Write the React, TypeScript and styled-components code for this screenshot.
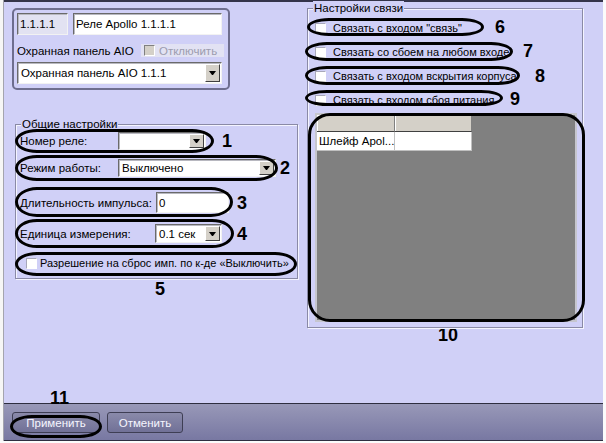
import React from 'react'
import styled, { createGlobalStyle } from 'styled-components'

const GlobalStyle = createGlobalStyle`
  html, body { margin: 0; padding: 0; }
  body {
    width: 606px;
    height: 443px;
    overflow: hidden;
    background: #fbfbfb;
    font-family: "Liberation Sans", Arial, sans-serif;
    font-size: 11px;
    color: #000;
  }
`

const Screen = styled.div`
  display: flex;
  width: 606px;
  height: 443px;
`

const LeftEdge = styled.div`
  width: 3px;
  height: 441px;
  border-right: 1px solid #a4a4ae;
  background: #f6f6f6;
`

const Window = styled.div`
  display: flex;
  flex-direction: column;
  width: 599px;
  height: 441px;
  box-sizing: border-box;
  border-top: 2px solid #34344a;
  background: #d0d0f7;
`

const Main = styled.div`
  flex: 1;
  display: flex;
  gap: 9px;
  padding: 6px 0 0 8px;
`

const Column = styled.div<{ $w: number }>`
  display: flex;
  flex-direction: column;
  width: ${p => p.$w}px;
`

const HeadPanel = styled.div`
  width: 218px;
  height: 82px;
  box-sizing: border-box;
  border: 2px solid #6e6e8e;
  border-radius: 5px;
  padding: 3px 0 0 3px;
`

const HeadRow = styled.div<{ $mt?: number; $h: number }>`
  display: flex;
  align-items: center;
  gap: 5px;
  height: ${p => p.$h}px;
  margin-top: ${p => p.$mt ?? 0}px;
`

const TextBox = styled.div<{ $w: number; $h: number; $ro?: boolean }>`
  width: ${p => p.$w}px;
  height: ${p => p.$h}px;
  box-sizing: border-box;
  display: flex;
  align-items: center;
  padding-left: 2px;
  background: ${p => (p.$ro ? '#e2e2f2' : '#fff')};
  border: 1px solid;
  border-color: #6a6a6a #f2f2f2 #f2f2f2 #6a6a6a;
  box-shadow: inset 1px 1px 0 #b8b8c0;
  font-size: 11.5px;
  white-space: nowrap;
  overflow: hidden;
`

const Combo = styled(TextBox)`
  padding: 1px 1px 1px 3px;
`

const ComboText = styled.span`
  flex: 1;
  white-space: nowrap;
  overflow: hidden;
`

const DropButton = styled.span`
  width: 15px;
  align-self: stretch;
  box-sizing: border-box;
  display: flex;
  align-items: center;
  justify-content: center;
  background: #d4d0c8;
  border: 1px solid;
  border-color: #fff #404040 #404040 #fff;
`

const Arrow = styled.span`
  width: 1px;
  height: 0;
  border-left: 3px solid transparent;
  border-right: 3px solid transparent;
  border-top: 4px solid #000;
`

const HeadLabel = styled.span`
  flex: 1;
  font-size: 11.5px;
  white-space: nowrap;
`

const DisabledCheck = styled.div`
  display: flex;
  align-items: center;
  gap: 4px;
  width: 80px;
  height: 13px;
  padding-left: 3px;
  margin-right: 4px;
  background: #e2e2f3;
  color: #9c9cae;
  font-size: 11.5px;
`

const CheckBox = styled.span<{ $disabled?: boolean }>`
  flex: none;
  width: 11px;
  height: 11px;
  box-sizing: border-box;
  background: ${p => (p.$disabled ? '#d4d0c8' : '#fff')};
  border: 1px solid;
  border-color: ${p => (p.$disabled ? '#808080 #fff #fff #808080' : '#a8a8ba #fff #fff #a8a8ba')};
`

const Group = styled.div<{ $w: number; $h: number; $mt: number; $ml: number }>`
  position: relative;
  display: flex;
  flex-direction: column;
  width: ${p => p.$w}px;
  height: ${p => p.$h}px;
  margin: ${p => p.$mt}px 0 0 ${p => p.$ml}px;
  box-sizing: border-box;
  border: 1px solid #8a8aa6;
  box-shadow: inset 1px 1px 0 #f4f4ff, 1px 1px 0 #f4f4ff;
`

const Legend = styled.span`
  align-self: flex-start;
  margin: -8px 0 0 5px;
  padding: 0 1px;
  line-height: 14px;
  background: #d0d0f7;
  font-size: 11.5px;
`

const FieldRow = styled.div<{ $mt: number; $h: number; $pl?: number }>`
  position: relative;
  display: flex;
  align-items: center;
  height: ${p => p.$h}px;
  margin-top: ${p => p.$mt}px;
  padding-left: ${p => p.$pl ?? 4}px;
`

const FieldLabel = styled.span<{ $w: number }>`
  flex: none;
  width: ${p => p.$w}px;
  font-size: 11.5px;
  white-space: nowrap;
`

const CheckLabel = styled.span<{ $gap: number }>`
  margin-left: ${p => p.$gap}px;
  font-size: 11px;
  white-space: nowrap;
`

const Ring = styled.span<{ $l: number; $t: number; $w: number; $h: number; $r?: string }>`
  position: absolute;
  left: ${p => p.$l}px;
  top: ${p => p.$t}px;
  width: ${p => p.$w}px;
  height: ${p => p.$h}px;
  box-sizing: border-box;
  border: 3px solid #000;
  border-radius: ${p => p.$r ?? '22px / 50%'};
  pointer-events: none;
`

const Num = styled.span<{ $ml?: number }>`
  margin-left: ${p => p.$ml ?? 0}px;
  color: #000;
  font: bold 18px/18px "Liberation Sans", Arial, sans-serif;
`

const Tag = styled.span<{ $x: number; $y: number }>`
  position: absolute;
  left: ${p => p.$x}px;
  top: ${p => p.$y}px;
  color: #000;
  font: bold 18px/18px "Liberation Sans", Arial, sans-serif;
`

const Caption = styled.div<{ $pl: number; $mt: number }>`
  padding-left: ${p => p.$pl}px;
  margin-top: ${p => p.$mt}px;
  font: bold 18px/18px "Liberation Sans", Arial, sans-serif;
`

const GridWrap = styled.div`
  position: relative;
  margin: 6px 0 0 7px;
`

const GridBox = styled.div`
  width: 262px;
  height: 209px;
  box-sizing: border-box;
  background: #808080;
  border: 2px solid #c6c6ce;
`

const Table = styled.div`
  display: grid;
  grid-template-columns: 78px 77px;
  grid-template-rows: 17px 19px;
`

const HeadCell = styled.div`
  box-sizing: border-box;
  background: #d4d0c8;
  border-right: 1px solid #808080;
  border-bottom: 1px solid #404040;
  box-shadow: inset 1px 1px 0 #fff;
`

const Cell = styled.div`
  box-sizing: border-box;
  display: flex;
  align-items: center;
  padding-left: 2px;
  background: #fff;
  border-right: 1px solid #c0c0c0;
  border-bottom: 1px solid #c0c0c0;
  font-size: 11.5px;
  white-space: nowrap;
`

const Footer = styled.div`
  display: flex;
  gap: 7px;
  height: 38px;
  box-sizing: border-box;
  padding: 8px 0 0 8px;
  border-top: 1px solid #2e2e40;
  border-bottom: 1px solid #2e2e40;
  background: linear-gradient(#9898b8, #7878a2);
`

const Button = styled.div<{ $w: number }>`
  position: relative;
  width: ${p => p.$w}px;
  height: 21px;
  box-sizing: border-box;
  display: flex;
  align-items: center;
  justify-content: center;
  border: 1px solid #3e3e54;
  border-radius: 3px;
  background: linear-gradient(#8a8aaa, #717197);
  color: #f6f6ff;
  font-size: 11.5px;
`

const Select = ({ w, h, text }: { w: number; h: number; text: string }) => (
  <Combo $w={w} $h={h}>
    <ComboText>{text}</ComboText>
    <DropButton><Arrow /></DropButton>
  </Combo>
)

const links = [
  { text: 'Связать с входом "связь"', mt: 6, ring: [-1, -3, 177, 18], tag: [187, -3], n: '6' },
  { text: 'Связать со сбоем на любом входе', mt: 10, ring: [-3, -3, 208, 19], tag: [215, -3], n: '7' },
  { text: 'Связать с входом вскрытия корпуса', mt: 10, ring: [-3, -3, 215, 19], tag: [227, -2], n: '8' },
  { text: 'Связать с входом сбоя питания', mt: 10, ring: [-3, -3, 198, 16], tag: [202, -3], n: '9' },
]

export default function App() {
  return (
    <>
      <GlobalStyle />
      <Screen>
        <LeftEdge />
        <Window>
          <Main>
            <Column $w={286}>
              <HeadPanel>
                <HeadRow $h={22}>
                  <TextBox $w={51} $h={22} $ro>1.1.1.1</TextBox>
                  <TextBox $w={149} $h={22}>Реле Apollo 1.1.1.1</TextBox>
                </HeadRow>
                <HeadRow $h={15} $mt={8}>
                  <HeadLabel>Охранная панель AIO</HeadLabel>
                  <DisabledCheck>
                    <CheckBox $disabled />
                    Отключить
                  </DisabledCheck>
                </HeadRow>
                <HeadRow $h={22} $mt={4}>
                  <Select w={205} h={22} text="Охранная панель AIO 1.1.1" />
                </HeadRow>
              </HeadPanel>

              <Group $w={283} $h={155} $mt={34} $ml={3}>
                <Legend>Общие настройки</Legend>
                <FieldRow $mt={1} $h={18}>
                  <FieldLabel $w={98}>Номер реле:</FieldLabel>
                  <Select w={88} h={18} text="" />
                  <Num $ml={16}>1</Num>
                  <Ring $l={-1} $t={-3} $w={199} $h={24} />
                </FieldRow>
                <FieldRow $mt={9} $h={18}>
                  <FieldLabel $w={98}>Режим работы:</FieldLabel>
                  <Select w={158} h={18} text="Выключено" />
                  <Num $ml={4}>2</Num>
                  <Ring $l={-1} $t={-4} $w={263} $h={26} />
                </FieldRow>
                <FieldRow $mt={15} $h={21}>
                  <FieldLabel $w={136}>Длительность импульса:</FieldLabel>
                  <TextBox $w={73} $h={21}>0</TextBox>
                  <Num $ml={8}>3</Num>
                  <Ring $l={-1} $t={-5} $w={218} $h={30} />
                </FieldRow>
                <FieldRow $mt={11} $h={19}>
                  <FieldLabel $w={135}>Единица измерения:</FieldLabel>
                  <Select w={67} h={19} text="0.1 сек" />
                  <Num $ml={15}>4</Num>
                  <Ring $l={-1} $t={-5} $w={219} $h={29} />
                </FieldRow>
                <FieldRow $mt={13} $h={14} $pl={10}>
                  <CheckBox />
                  <CheckLabel $gap={3}>Разрешение на сброс имп. по к-де «Выключить»</CheckLabel>
                  <Ring $l={-1} $t={-4} $w={282} $h={24} />
                </FieldRow>
              </Group>
              <Caption $pl={143} $mt={1}>5</Caption>
            </Column>

            <Column $w={276}>
              <Group $w={276} $h={320} $mt={0} $ml={0}>
                <Legend>Настройки связи</Legend>
                {links.map(l => (
                  <FieldRow key={l.n} $mt={l.mt} $h={14} $pl={7}>
                    <CheckBox />
                    <CheckLabel $gap={7}>{l.text}</CheckLabel>
                    <Ring $l={l.ring[0]} $t={l.ring[1]} $w={l.ring[2]} $h={l.ring[3]} />
                    <Tag $x={l.tag[0]} $y={l.tag[1]}>{l.n}</Tag>
                  </FieldRow>
                ))}
                <GridWrap>
                  <GridBox>
                    <Table>
                      <HeadCell />
                      <HeadCell />
                      <Cell>Шлейф Apol...</Cell>
                      <Cell />
                    </Table>
                  </GridBox>
                  <Ring $l={-7} $t={0} $w={277} $h={209} $r="22px" />
                </GridWrap>
              </Group>
              <Caption $pl={131} $mt={-2}>10</Caption>
            </Column>
          </Main>

          <Footer>
            <Button $w={88}>
              Применить
              <Ring $l={-3} $t={2} $w={92} $h={23} />
              <Tag $x={37} $y={-24}>11</Tag>
            </Button>
            <Button $w={76}>Отменить</Button>
          </Footer>
        </Window>
      </Screen>
    </>
  )
}
